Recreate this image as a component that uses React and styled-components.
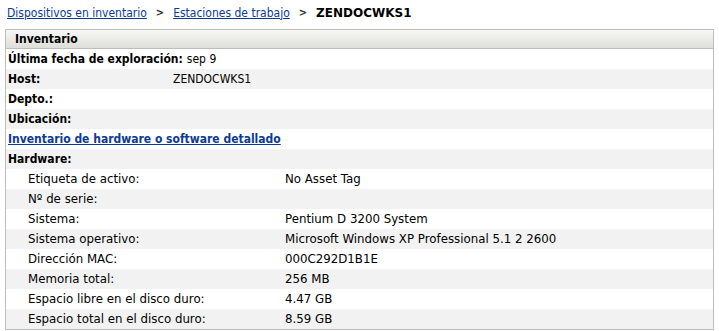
import React from "react";
import styled, { createGlobalStyle } from "styled-components";

const Global = createGlobalStyle`
  body {
    margin: 0;
    padding: 4px 5px 0 5px;
    background: #ffffff;
    font-family: "DejaVu Sans Condensed", "DejaVu Sans", sans-serif;
    font-size: 11px;
    color: #000000;
  }
`;

const Crumbs = styled.div`
  display: flex;
  align-items: center;
  gap: 9px;
  height: 17px;
  padding-left: 2px;
  margin-bottom: 8px;
  font-size: 12px;
`;

const CrumbLink = styled.a`
  color: #0b3b96;
  text-decoration: underline;
`;

const Sep = styled.span`
  font-weight: bold;
  color: #333;
  font-size: 11px;
`;

const Current = styled.span`
  font-weight: bold;
  font-family: "DejaVu Sans", sans-serif;
  font-size: 12px;
`;

const Panel = styled.div`
  border: 1px solid #bdbdb9;
  width: 707px;
`;

const Head = styled.div`
  height: 18px;
  display: flex;
  align-items: center;
  padding-left: 9px;
  font-weight: bold;
  font-size: 12px;
  background: linear-gradient(#f7f7f5, #dededa);
  border-bottom: 1px solid #bdbdb9;
`;

const Row = styled.div`
  height: 20px;
  display: flex;
  align-items: center;
  padding-left: 2px;
  background: ${(p) => (p.$shade ? "#f2f2f2" : "#ffffff")};
  font-size: 12px;
`;

const Label = styled.span`
  font-weight: bold;
  width: ${(p) => (p.$w ? p.$w + "px" : "auto")};
  margin-right: ${(p) => (p.$w ? 0 : 4)}px;
`;

const BigLink = styled.a`
  color: #0b3b96;
  font-weight: bold;
  text-decoration: underline;
`;

const DetailRow = styled.div`
  height: 20px;
  display: grid;
  grid-template-columns: 257px 1fr;
  align-items: center;
  padding-left: 22px;
  background: ${(p) => (p.$shade ? "#f2f2f2" : "#ffffff")};
  font-family: "DejaVu Sans", sans-serif;
  font-size: 11.8px;
`;

const details = [
  ["Etiqueta de activo:", "No Asset Tag"],
  ["Nº de serie:", ""],
  ["Sistema:", "Pentium D 3200 System"],
  ["Sistema operativo:", "Microsoft Windows XP Professional 5.1 2 2600"],
  ["Dirección MAC:", "000C292D1B1E"],
  ["Memoria total:", "256 MB"],
  ["Espacio libre en el disco duro:", "4.47 GB"],
  ["Espacio total en el disco duro:", "8.59 GB"],
];

export default function App() {
  return (
    <>
      <Global />
      <Crumbs>
        <CrumbLink href="#">Dispositivos en inventario</CrumbLink>
        <Sep>&gt;</Sep>
        <CrumbLink href="#">Estaciones de trabajo</CrumbLink>
        <Sep>&gt;</Sep>
        <Current>ZENDOCWKS1</Current>
      </Crumbs>
      <Panel>
        <Head>Inventario</Head>
        <Row>
          <Label>Última fecha de exploración:</Label>
          <span>sep 9</span>
        </Row>
        <Row $shade>
          <Label $w={165}>Host:</Label>
          <span>ZENDOCWKS1</span>
        </Row>
        <Row>
          <Label>Depto.:</Label>
        </Row>
        <Row $shade>
          <Label>Ubicación:</Label>
        </Row>
        <Row>
          <BigLink href="#">Inventario de hardware o software detallado</BigLink>
        </Row>
        <Row $shade>
          <Label>Hardware:</Label>
        </Row>
        {details.map(([k, v], i) => (
          <DetailRow key={k} $shade={i % 2 === 1}>
            <span>{k}</span>
            <span>{v}</span>
          </DetailRow>
        ))}
      </Panel>
    </>
  );
}
